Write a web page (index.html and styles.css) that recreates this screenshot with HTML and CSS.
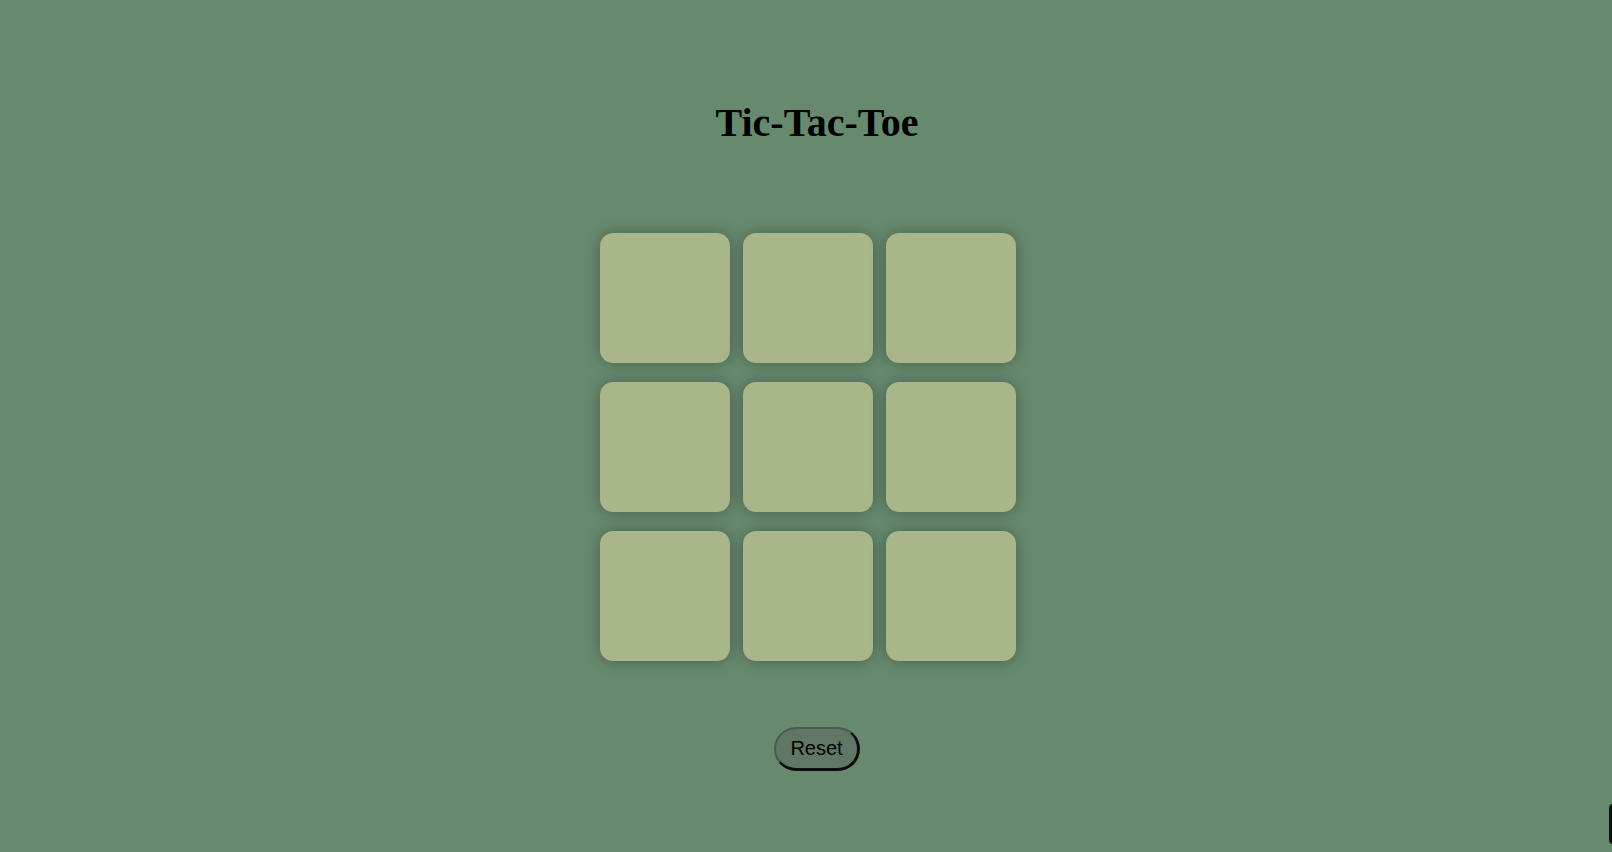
FILE: index.html
```html
<!DOCTYPE html>
<html lang="en">
<head>
<meta charset="UTF-8">
<title>Tic-Tac-Toe</title>
<link rel="stylesheet" href="styles.css">
</head>
<body>
<main class="app">
  <h1 class="title">Tic-Tac-Toe</h1>
  <div class="board">
    <button class="box"></button>
    <button class="box"></button>
    <button class="box"></button>
    <button class="box"></button>
    <button class="box"></button>
    <button class="box"></button>
    <button class="box"></button>
    <button class="box"></button>
    <button class="box"></button>
  </div>
  <button class="reset">Reset</button>
</main>
<div class="edge-tab"></div>
</body>
</html>
```
FILE: styles.css
```css
html, body {
  margin: 0;
  padding: 0;
  height: 100%;
}
body {
  background-color: #678a6e;
  overflow: hidden;
}
.app {
  display: flex;
  flex-direction: column;
  align-items: center;
  padding-top: 101px;
  padding-left: 22px;
}
.title {
  margin: 0;
  font-family: "Liberation Serif", "Times New Roman", serif;
  font-weight: bold;
  font-size: 40px;
  line-height: 44px;
  color: #000;
}
.board {
  margin-top: 88px;
  margin-right: 19px;
  display: grid;
  grid-template-columns: repeat(3, 130px);
  grid-auto-rows: 130px;
  column-gap: 13px;
  row-gap: 19px;
}
.box {
  border: none;
  padding: 0;
  border-radius: 13px;
  background-color: #a8b68a;
  box-shadow: 0 0 16px rgba(0, 0, 0, 0.3);
}
.reset {
  margin-top: 66px;
  box-sizing: border-box;
  height: 44px;
  width: 86px;
  padding: 0;
  font-family: "Liberation Sans", Arial, sans-serif;
  font-size: 20px;
  color: #000;
  background-color: #607765;
  border-style: solid;
  border-width: 2px 3px 3px 2px;
  border-color: #4d5a50 #0d0d0d #0d0d0d #4d5a50;
  border-radius: 22px;
}
.edge-tab {
  position: fixed;
  right: -6px;
  top: 804px;
  width: 9px;
  height: 40px;
  background: #111;
  border-radius: 4px;
}
```
